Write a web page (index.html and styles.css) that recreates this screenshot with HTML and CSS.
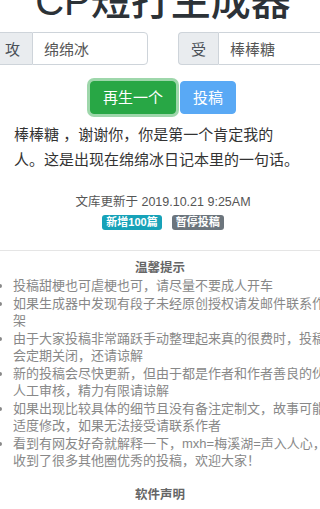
FILE: index.html
```html
<!DOCTYPE html>
<html lang="zh-CN">
<head>
    <meta charset="UTF-8">
    <meta name="viewport" content="width=device-width, initial-scale=1.0">
    <title>CP短打生成器</title>
    <link rel="stylesheet" href="styles.css">
</head>
<body>
    <div class="page">
        <h1 class="title">CP短打生成器</h1>

        <!-- 攻 / 受 -->
        <div class="pair">
            <div class="input-group">
                <span class="addon">攻</span>
                <input class="field" type="text" value="绵绵冰">
            </div>
            <div class="input-group">
                <span class="addon">受</span>
                <input class="field" type="text" value="棒棒糖">
            </div>
        </div>

        <div class="actions">
            <button class="btn btn-green">再生一个</button>
            <button class="btn btn-blue">投稿</button>
        </div>

        <p class="story">棒棒糖 ，谢谢你，你是第一个肯定我的人。这是出现在绵绵冰日记本里的一句话。</p>

        <p class="updated">文库更新于 2019.10.21 9:25AM</p>
        <div class="badges">
            <span class="badge badge-teal">新增100篇</span>
            <span class="badge badge-gray">暂停投稿</span>
        </div>
    </div>

    <div class="notes">
        <h4>温馨提示</h4>
        <ul>
            <li>投稿甜梗也可虐梗也可，请尽量不要成人开车</li>
            <li>如果生成器中发现有段子未经原创授权请发邮件联系作者下架</li>
            <li>由于大家投稿非常踊跃手动整理起来真的很费时，投稿功能会定期关闭，还请谅解</li>
            <li>新的投稿会尽快更新，但由于都是作者和作者善良的伙伴们人工审核，精力有限请谅解</li>
            <li>如果出现比较具体的细节且没有备注定制文，故事可能会被适度修改，如果无法接受请联系作者</li>
            <li>看到有网友好奇就解释一下，mxh=梅溪湖=声入人心，本站收到了很多其他圈优秀的投稿，欢迎大家！</li>
        </ul>
        <h4 class="last">软件声明</h4>
    </div>
</body>
</html>
```

FILE: styles.css
```css
html, body {
    overflow: hidden;
}
body {
    margin: 0;
    background: #fff;
    font-family: "Liberation Sans", "Noto Sans CJK SC", sans-serif;
    color: #333;
}
.page {
    width: 342px;
    margin-left: -8px;
}
.title {
    margin: -23px 0 0;
    font-size: 40px;
    line-height: 48px;
    font-weight: 500;
    text-align: center;
    color: #2c3237;
}
.pair {
    display: flex;
    gap: 30px;
    margin-top: 7px;
}
.input-group {
    flex: 1;
    min-width: 0;
    display: flex;
    height: 33px;
}
.addon {
    flex: none;
    width: 40px;
    box-sizing: border-box;
    display: flex;
    align-items: center;
    justify-content: center;
    background: #e9ecef;
    border: 1px solid #ced4da;
    border-right: none;
    border-radius: 4px 0 0 4px;
    font-size: 15px;
    color: #495057;
}
.field {
    flex: 1;
    width: 0;
    min-width: 0;
    box-sizing: border-box;
    padding: 0 11px;
    border: 1px solid #ced4da;
    border-radius: 0 4px 4px 0;
    font-family: inherit;
    font-size: 15px;
    color: #555;
}
.actions {
    display: flex;
    justify-content: center;
    gap: 4px;
    margin-top: 16px;
}
.btn {
    padding: 6px 12px;
    border: 1px solid transparent;
    border-radius: 4px;
    font-family: inherit;
    font-size: 15px;
    line-height: 19px;
    color: #fff;
}
.btn-green {
    background: #28a745;
    border-color: #28a745;
    box-shadow: 0 0 0 3px rgba(40, 167, 69, 0.45);
}
.btn-blue {
    background: #59a9f5;
    border-color: #59a9f5;
}
.story {
    margin: 8px 0 0;
    padding: 0 33px 0 22px;
    font-size: 15px;
    line-height: 25px;
    color: #333;
}
.updated {
    margin: 21px 0 0;
    text-align: center;
    font-size: 12.5px;
    line-height: 18px;
    color: #555;
}
.badges {
    display: flex;
    justify-content: center;
    gap: 10px;
    margin-top: 4px;
}
.badge {
    padding: 0 4px;
    border-radius: 3px;
    font-size: 11px;
    line-height: 15px;
    font-weight: bold;
    color: #fff;
}
.badge-teal {
    background: #17a2b8;
}
.badge-gray {
    background: #6c757d;
}
.notes {
    margin-top: 20px;
    border-top: 1px solid #e5e5e5;
    padding-top: 8px;
}
.notes h4 {
    margin: 0;
    text-align: center;
    font-size: 12.5px;
    line-height: 18px;
    font-weight: bold;
    color: #666;
}
.notes h4.last {
    margin-top: 16px;
    padding-bottom: 5px;
    border-bottom: 1px solid #eee;
}
.notes ul {
    width: 344px;
    margin: 0;
    padding-left: 13px;
    font-size: 13px;
    line-height: 17.5px;
    color: #888;
}
```
